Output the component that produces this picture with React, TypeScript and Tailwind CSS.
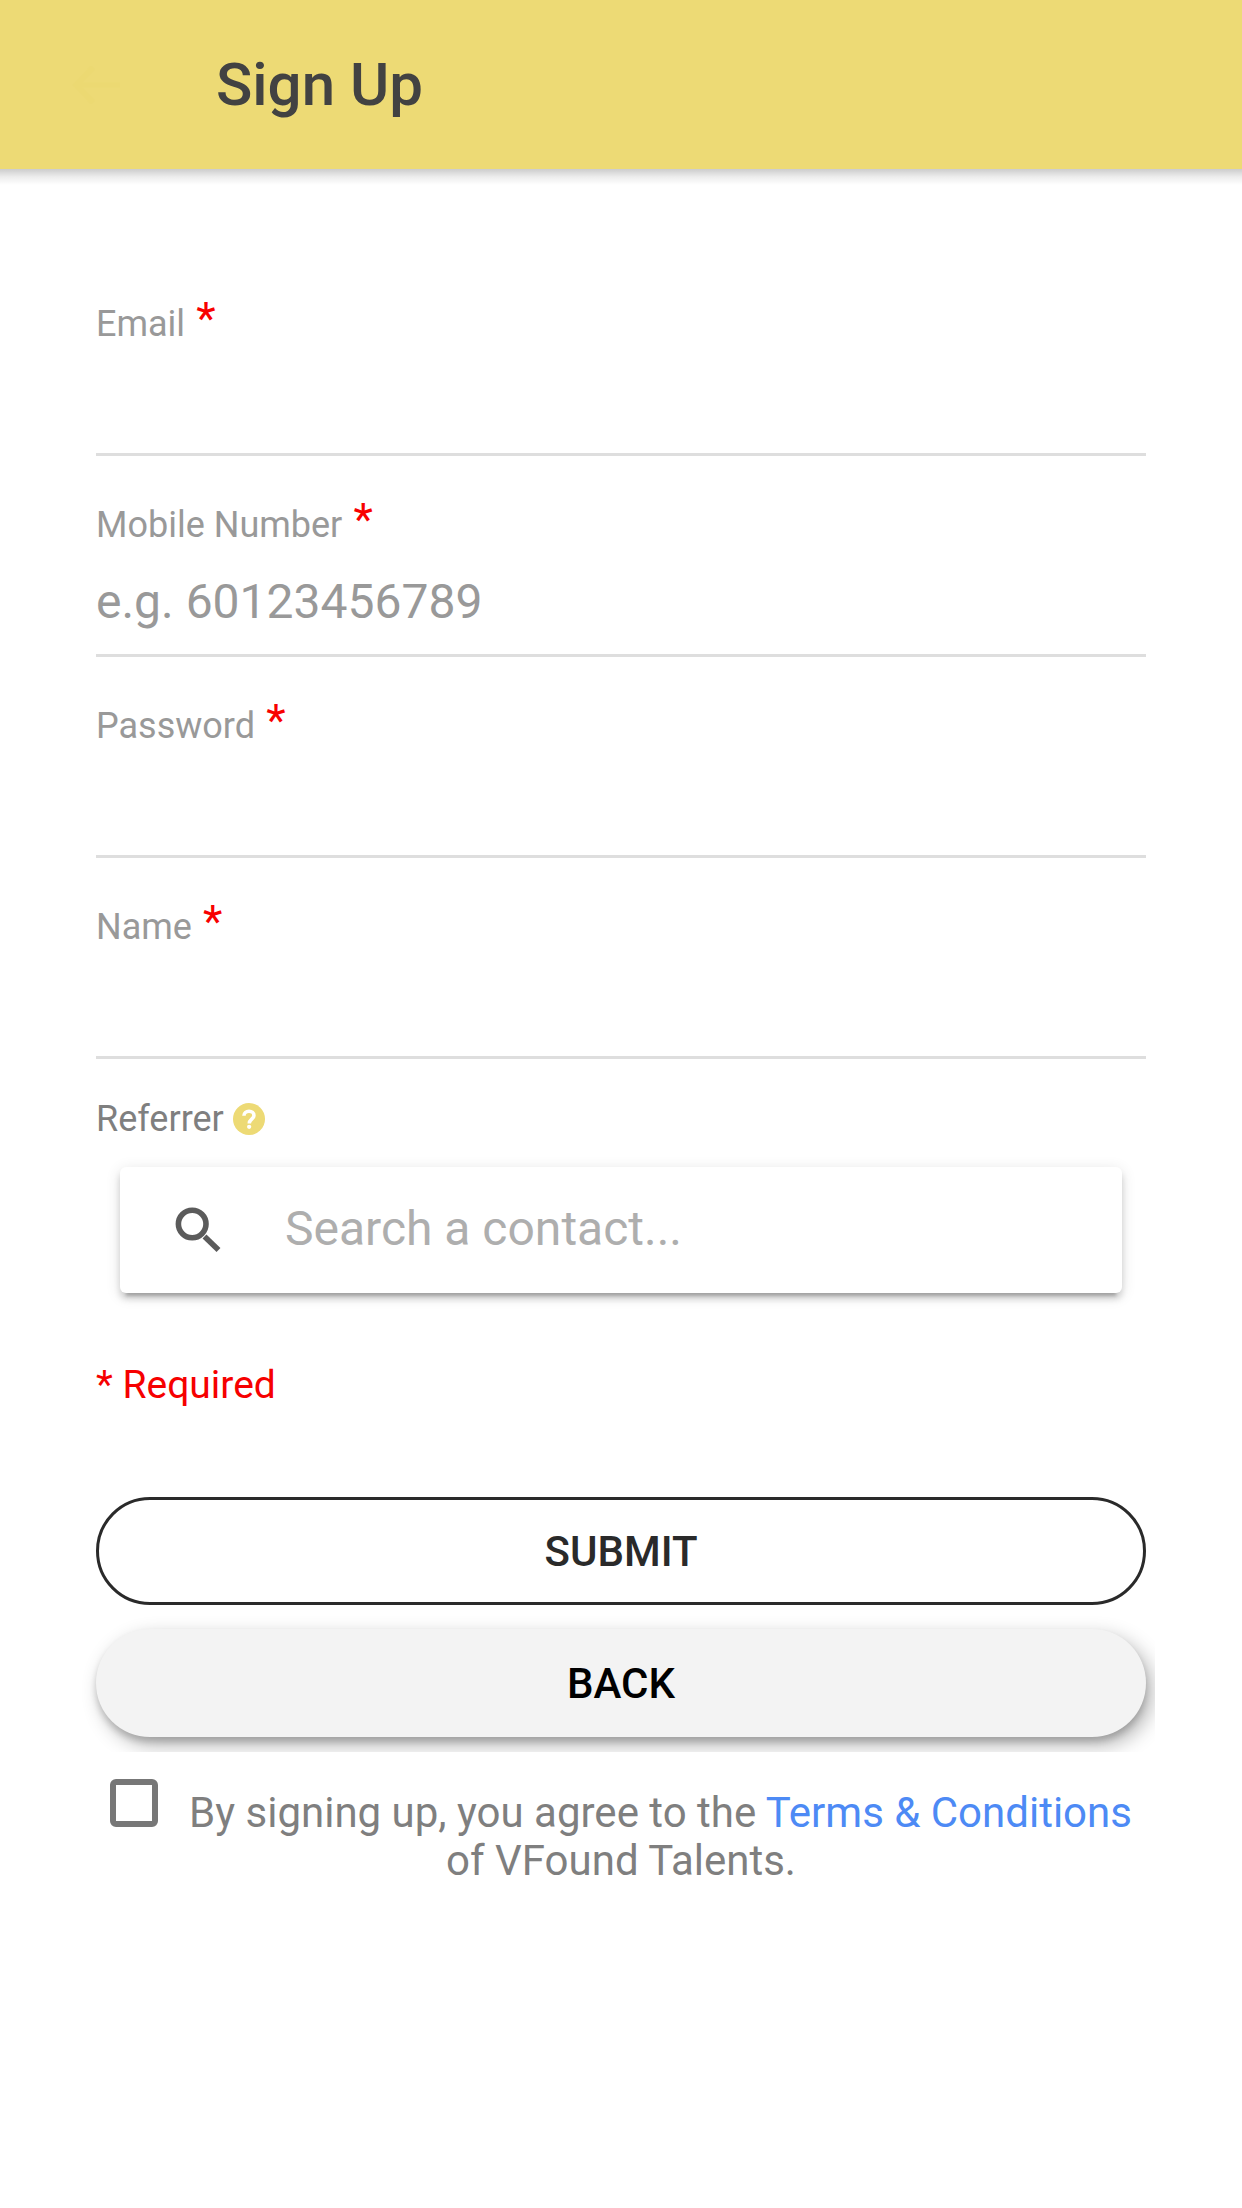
import { useState } from "react";

type FieldProps = {
  label: string;
  type?: string;
  placeholder?: string;
};

const fields: FieldProps[] = [
  { label: "Email", type: "email" },
  { label: "Mobile Number", type: "tel", placeholder: "e.g. 60123456789" },
  { label: "Password", type: "password" },
  { label: "Name" }
];

export default function App() {
  const [agreed, setAgreed] = useState(false);

  return (
    <div className="min-h-[2208px] bg-white font-['Roboto',sans-serif]">
      <header className="flex h-[169px] items-center bg-[#edda75] pt-px pl-[72px]">
        <button type="button" aria-label="Go back" className="mr-24 h-12 w-12 text-[#ecd972]">
          <svg viewBox="0 0 24 24" className="h-12 w-12" fill="currentColor" aria-hidden="true">
            <path d="M24 10.7v2.6H5.2l6.2 6.5L9.5 21.6.2 12l9.3-9.6 1.9 1.8-6.2 6.5z" />
          </svg>
        </button>
        <h1 className="text-[60px] leading-[72px] font-medium text-[#424242]">Sign Up</h1>
      </header>
      <div className="h-4 bg-linear-to-b from-black/20 via-black/7 to-transparent" />

      <main className="px-24 pt-[70px]">
        {fields.map((field) => (
          <Field key={field.label} {...field} />
        ))}

        <div className="mt-9 flex h-12 items-center text-[36px] leading-[48px] text-[#7f7f7f]">
          Referrer
          <HelpIcon />
        </div>

        <div className="mx-6 mt-6 flex h-[126px] items-center rounded-md bg-white pb-0.5 pl-[54px] shadow-[0_9px_3px_-6px_rgba(0,0,0,0.2),0_6px_6px_0_rgba(0,0,0,0.14),0_3px_15px_0_rgba(0,0,0,0.12)]">
          <SearchIcon />
          <input
            type="search"
            placeholder="Search a contact..."
            className="ml-[63px] h-[60px] flex-1 bg-transparent text-[48px] leading-[60px] outline-none placeholder:text-[#aeaeae]"
          />
        </div>

        <p className="mt-[68px] text-[39px] leading-[48px] text-[#f60000]">* Required</p>

        <button
          type="button"
          className="mt-[88px] block h-[108px] w-full rounded-full border-3 border-[#2a2a2a] text-[42px] font-medium text-[#2a2a2a]"
        >
          SUBMIT
        </button>
        <button
          type="button"
          className="mt-6 block h-[108px] w-full rounded-full bg-[#f3f3f3] text-[42px] font-medium text-black shadow-[0_5px_6px_0_rgba(0,0,0,0.16),6px_8px_20px_0_rgba(0,0,0,0.3)] [clip-path:inset(-20px_-9px_-15px_-20px)]"
        >
          BACK
        </button>

        <div className="mt-[42px] text-center text-[42px] leading-[48px] text-[#7f7f7f]">
          <span
            role="checkbox"
            tabIndex={0}
            aria-checked={agreed}
            aria-label="Agree to terms"
            onClick={() => setAgreed(!agreed)}
            className={`mr-[31px] inline-block h-12 w-12 rounded-md border-6 border-[#777777] ${agreed ? "bg-[#777777]" : ""}`}
          />
          By signing up, you agree to the <a className="text-[#4d8af5]">Terms &amp; Conditions</a>
          <br />
          of VFound Talents.
        </div>
      </main>
    </div>
  );
}

function Field({ label, type = "text", placeholder }: FieldProps) {
  return (
    <label className="block h-[201px] border-b-3 border-[#dedede] pt-[45px]">
      <span className="block h-12 text-[36px] leading-[48px] text-[#999999]">
        {label}
        <span className="align-[2px] text-[45px] leading-[0] whitespace-pre text-[#f80000]"> *</span>
      </span>
      <input
        type={type}
        placeholder={placeholder}
        className="mt-[23px] block h-[60px] w-full bg-transparent text-[48px] leading-[60px] outline-none placeholder:text-[#999999]"
      />
    </label>
  );
}

function HelpIcon() {
  return (
    <svg viewBox="0 0 24 24" className="ml-[9px] h-8 w-8" aria-hidden="true">
      <circle cx="12" cy="12" r="12" fill="#edda75" />
      <path
        d="M8.2 9.6c0-2.1 1.6-3.4 3.8-3.4s3.7 1.2 3.7 3.1c0 2.7-3.5 2.9-3.5 6"
        fill="none"
        stroke="#fff"
        strokeWidth="2.7"
      />
      <circle cx="12.1" cy="17.9" r="1.6" fill="#fff" />
    </svg>
  );
}

function SearchIcon() {
  return (
    <svg viewBox="0 0 48 48" className="h-12 w-12" fill="none" stroke="#5b5b5b" aria-hidden="true">
      <circle cx="18.2" cy="19" r="13.8" strokeWidth="5.6" />
      <path d="M30.5 31.5L44.5 45" strokeWidth="5.6" />
    </svg>
  );
}
